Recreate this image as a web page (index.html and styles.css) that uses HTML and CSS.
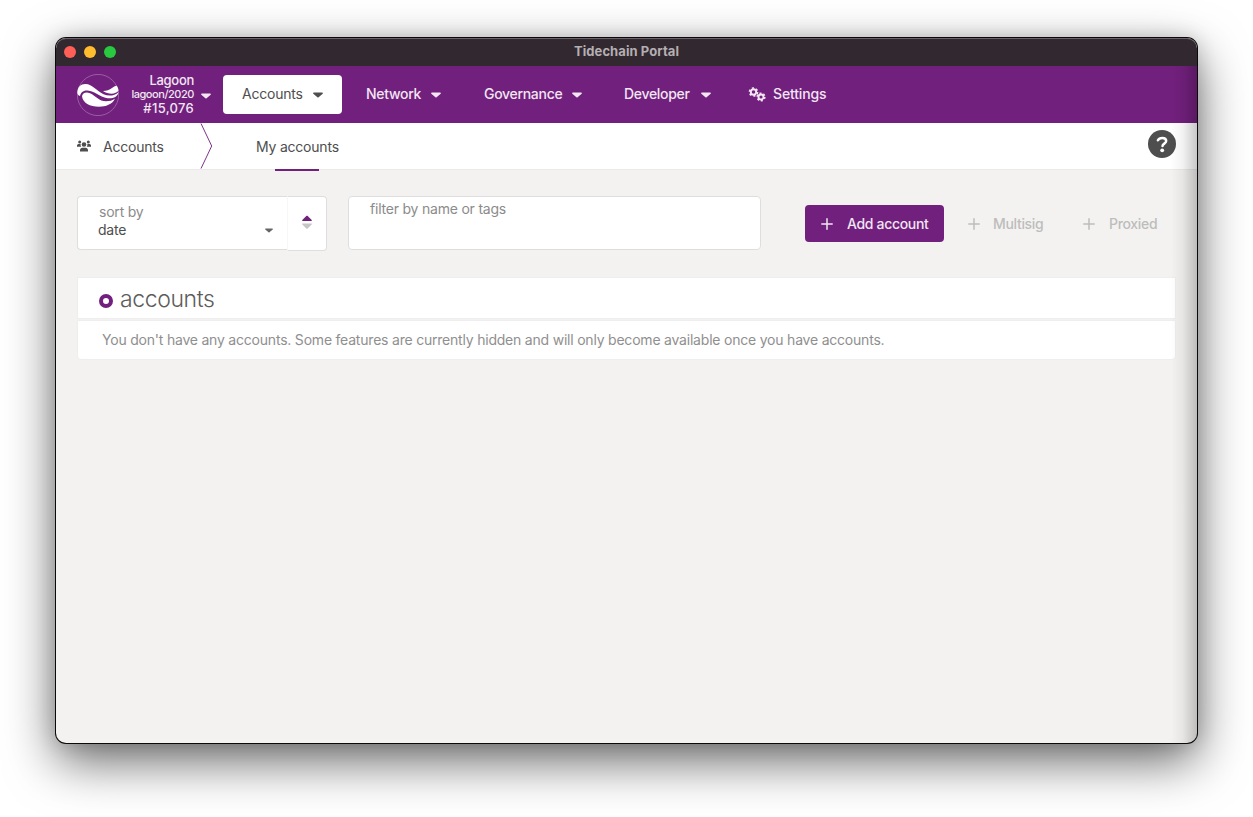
FILE: index.html
```html
<!DOCTYPE html>
<html lang="en">
<head>
<meta charset="utf-8">
<title>Tidechain Portal</title>
<link rel="stylesheet" href="styles.css">
</head>
<body>
<svg class="defs" width="0" height="0">
  <symbol id="caret" viewBox="0 0 10 6"><path d="M.9.5h8.2c.7 0 1 .8.6 1.200L5.600 5.200c-.3.3-.9.3-1.200 0L.3 1.700C-.1 1.300.2.5.9.5z"/></symbol>
  <symbol id="plus" viewBox="0 0 12 12"><path d="M6 .8v10.400M.8 6h10.400" fill="none" stroke="currentColor" stroke-width="1.500" stroke-linecap="round"/></symbol>
</svg>
<div class="window">
  <div class="titlebar">
    <div class="lights"><i class="red"></i><i class="yellow"></i><i class="green"></i></div>
    <span class="title">Tidechain Portal</span>
  </div>
  <header class="menu">
    <svg class="logo" viewBox="0 0 42 42">
      <circle cx="21" cy="21" r="20.600" fill="none" stroke="#a978b0" stroke-width=".7"/>
      <path fill="#fff" d="M.3 19C.5 13 3.500 10 8.500 10c7 0 11 7 18 10.200 5 2.200 11 1.800 15-2-1 4.800-6 6.800-11 6C22 22.800 18 17 10.500 16.500 6 16.200 4 18.500 3 22 1.200 21.500.5 20 .3 19z"/>
      <path fill="#fff" d="M26 17c3.500 0 6.500-1 9-3 1.500-1.200 3-2.300 4.800-2.300.9 1.500 1.600 3 1.700 4.800-2.800 4.200-10 4-15.500.5z"/>
      <path fill="#fff" d="M5 22c1-3.500 4.500-4.300 8-2.700 6 2.700 9 8 16 8 3.500 0 6.500-.8 9-2.500-3 5.700-9 7.900-16 7.900C13 32.700 5.500 29 5 22z"/>
    </svg>
    <div class="chain">
      <span>Lagoon</span><span class="spec">lagoon/2020</span><span class="block">#15,076</span>
    </div>
    <svg class="caret chain-caret"><use href="#caret"/></svg>
    <nav class="nav">
      <a class="item active"><span>Accounts</span><svg class="caret"><use href="#caret"/></svg></a>
      <a class="item network"><span>Network</span><svg class="caret"><use href="#caret"/></svg></a>
      <a class="item governance"><span>Governance</span><svg class="caret"><use href="#caret"/></svg></a>
      <a class="item developer"><span>Developer</span><svg class="caret"><use href="#caret"/></svg></a>
      <a class="item settings">
        <svg class="cogs" viewBox="0 0 18 15" fill="none" stroke="currentColor">
          <circle cx="5.500" cy="5" r="2.700" stroke-width="1.900"/>
          <circle cx="5.500" cy="5" r="4" stroke-width="1.700" stroke-dasharray="2.100 2.089"/>
          <circle cx="13" cy="10" r="2.500" stroke-width="1.900"/>
          <circle cx="13" cy="10" r="3.800" stroke-width="1.600" stroke-dasharray="2 1.979"/>
        </svg>
        <span>Settings</span>
      </a>
    </nav>
  </header>
  <div class="tabs">
    <svg class="users" viewBox="0 0 14 12" fill="currentColor">
      <circle cx="2.700" cy="1.900" r="1.500"/><circle cx="11.300" cy="1.900" r="1.500"/><circle cx="7" cy="4.500" r="2.300"/>
      <path d="M0 6.700V5.500C0 4.600.8 4 1.700 4h2c-.3 1.100 0 2 .7 2.700zM14 6.700V5.500c0-.9-.8-1.500-1.700-1.500h-2c.3 1.100 0 2-.7 2.700zM3 11.500v-1.300c0-1.600 1-2.500 2.400-2.500h3.200c1.400 0 2.400.9 2.400 2.500v1.300z"/>
    </svg>
    <span class="section">Accounts</span>
    <svg class="chevron" viewBox="0 0 13 46"><path d="M1 .5 11.700 23 1 45.500" fill="none" stroke="#7d3389" stroke-width="1"/></svg>
    <a class="tab">My accounts</a>
    <svg class="help" viewBox="0 0 28 28"><circle cx="14" cy="14" r="14" fill="#4e4e4e"/><path d="M9.900 10.300C10.700 8.700 12.200 7.900 14.200 7.900c2.300 0 4 1.200 4 3.100 0 2.500-3.700 2.700-3.700 5" fill="none" stroke="#fff" stroke-width="2.500" stroke-linecap="round"/><circle cx="14.200" cy="20.300" r="1.900" fill="#fff"/></svg>
  </div>
  <main class="content">
    <div class="tools">
      <div class="sort">
        <div class="select">
          <label>sort by</label>
          <div class="value"><span>date</span><svg class="caret"><use href="#caret"/></svg></div>
        </div>
        <div class="order">
          <svg viewBox="0 0 10 14"><path fill="#72207d" d="M.6 6h8.800c.5 0 .6-.6.300-.9L5.700 1c-.4-.4-1-.4-1.400 0L.3 5.100C0 5.400.1 6 .6 6z"/><path fill="#c6c6c6" d="M.6 8.500h8.800c.5 0 .6.600.3.900l-4 4c-.4.400-1 .4-1.400 0l-4-4C0 9.100.1 8.500.6 8.500z"/></svg>
        </div>
      </div>
      <div class="filter"><label>filter by name or tags</label></div>
      <div class="buttons">
        <a class="btn primary"><svg class="plus"><use href="#plus"/></svg><span>Add account</span></a>
        <a class="btn multisig"><svg class="plus"><use href="#plus"/></svg><span>Multisig</span></a>
        <a class="btn proxied"><svg class="plus"><use href="#plus"/></svg><span>Proxied</span></a>
      </div>
    </div>
    <section class="table">
      <h1><i class="dot"></i><span>accounts</span></h1>
      <p><span>You don't have any accounts. Some features are currently hidden and will only become available once you have accounts.</span></p>
    </section>
  </main>
  <div class="edge"></div>
</div>
</body>
</html>
```
FILE: styles.css
```css
* { box-sizing: border-box; }
body {
  margin: 0; height: 817px; padding: 38px 56px 74px; overflow: hidden; background: #fff;
  font: 14px/20px Inter, "Liberation Sans", sans-serif; letter-spacing: -.21px; color: #4e4e4e;
}
svg { display: block; flex: none; }
.defs { position: absolute; }
.window {
  position: relative; width: 1141px; height: 705px; overflow: hidden;
  display: flex; flex-direction: column; border-radius: 10px; background: #f3f2f1;
  box-shadow: 0 0 0 1px #0a0a0a, 0 18px 50px rgba(0,0,0,.6), 0 0 20px rgba(0,0,0,.16);
}
.titlebar {
  height: 28px; flex: none; display: grid; grid-template-columns: 1fr auto 1fr; align-items: center;
  background: #32282f; border-radius: 10px 10px 0 0; box-shadow: inset 0 1px 0 #6b6369;
}
.lights { display: flex; gap: 8px; padding-left: 8px; }
.lights i { width: 12px; height: 12px; border-radius: 50%; }
.red { background: #ff5f57; }
.yellow { background: #febc2e; }
.green { background: #28c840; }
.title { font-size: 13px; font-weight: 700; letter-spacing: .08px; color: #b4afb2; line-height: 27px; height: 28px; }
.menu { height: 57px; flex: none; display: flex; align-items: center; background: #72207d; color: #f1e6f2; padding-left: 21px; font-weight: 500; letter-spacing: -.3px; }
.logo { width: 42px; height: 42px; }
.chain { width: 75px; display: flex; flex-direction: column; align-items: flex-end; font-size: 13px; line-height: 14px; margin-top: -1px; }
.spec { font-size: 11px; line-height: 14px; letter-spacing: -.45px; }
.block { letter-spacing: .3px; }
.caret { width: 10px; height: 6px; fill: currentColor; }
.chain-caret { margin: 2px 12px 0 7px; }
.nav { display: flex; }
.item { height: 39px; display: flex; align-items: center; justify-content: space-between; line-height: 18px; }
.item span { padding-bottom: 2px; }
.active { width: 119px; padding: 0 19px 0 19px; background: #fff; color: #4e4e4e; border-radius: 4px; font-weight: 400; letter-spacing: -.21px; }
.network { width: 99px; padding-left: 24px; }
.governance { width: 141px; padding-left: 43px; }
.developer { width: 129px; padding-left: 42px; }
.settings { padding-left: 37px; gap: 7px; letter-spacing: -.15px; }
.cogs { width: 18px; height: 15px; margin-top: -1px; }
.tabs { height: 47px; flex: none; display: flex; background: #fff; border-bottom: 1px solid #eaeae9; padding-left: 21px; line-height: 48px; }
.users { width: 14px; height: 12px; margin-top: 17px; }
.section { width: 97px; margin-left: 12px; }
.chevron { width: 13px; height: 46px; }
.tab { margin-left: 43px; height: 48px; display: flex; flex-direction: column; align-items: center; }
.tab::after { content: ""; width: 44px; height: 2px; margin-top: -2px; background: #72207d; }
.help { width: 28px; height: 28px; margin: 7px 21px 0 auto; }
.content { padding: 26px 21px 0; flex: 1; }
.tools { display: flex; }
.sort { display: flex; width: 250px; }
.select { width: 210px; height: 54px; background: #fff; border: 1px solid #dededf; border-right: 0; border-radius: 4px 0 0 4px; padding: 5px 14px 0 20px; }
.select label { display: block; color: #8b8b8b; height: 19px; padding-left: 1px; }
.value { display: flex; align-items: center; justify-content: space-between; line-height: 18px; }
.value .caret { width: 8px; height: 5px; color: #666; }
.order { width: 40px; height: 55px; background: #fff; border: 1px solid #dededf; border-left-color: #f7f7f7; border-radius: 0 4px 4px 0; padding: 18px 0 0 14px; }
.order svg { width: 10px; height: 14px; }
.filter { margin-left: 21px; width: 413px; height: 54px; background: #fff; border: 1px solid #dededf; border-radius: 4px; padding: 2px 21px; color: #8b8b8b; }
.buttons { margin: 9px 0 0 44px; display: flex; height: 37px; }
.btn { display: flex; align-items: center; color: #bdbdbc; font-weight: 500; gap: 14px; letter-spacing: -.32px; }
.plus { width: 12px; height: 12px; }
.primary { width: 139px; padding-left: 16px; background: #72207d; color: #f1e6f2; border-radius: 4px; }
.multisig { width: 115px; padding-left: 24px; gap: 13px; }
.proxied { padding-left: 24px; }
.table { margin-top: 26px; }
.table h1 { margin: 0; height: 42px; display: flex; background: #fff; border: 1px solid #efeeee; font-size: 23px; line-height: 42px; font-weight: 300; letter-spacing: -.4px; color: #5c5c5c; padding-left: 21px; }
.dot { width: 14px; height: 14px; border: 4px solid #72207d; border-radius: 50%; margin: 16px 7px 0 0; }
.table p { margin: 1px 0 0; height: 40px; line-height: 37px; padding-left: 24px; background: #fff; color: #8f8f8f; border: 1px solid #efeeee; border-radius: 0 0 4px 4px; }
.edge { position: absolute; top: 28px; right: 0; width: 26px; bottom: 0; background: linear-gradient(90deg, rgba(0,0,0,0), rgba(0,0,0,.05) 45%, rgba(0,0,0,.22)); }
```
